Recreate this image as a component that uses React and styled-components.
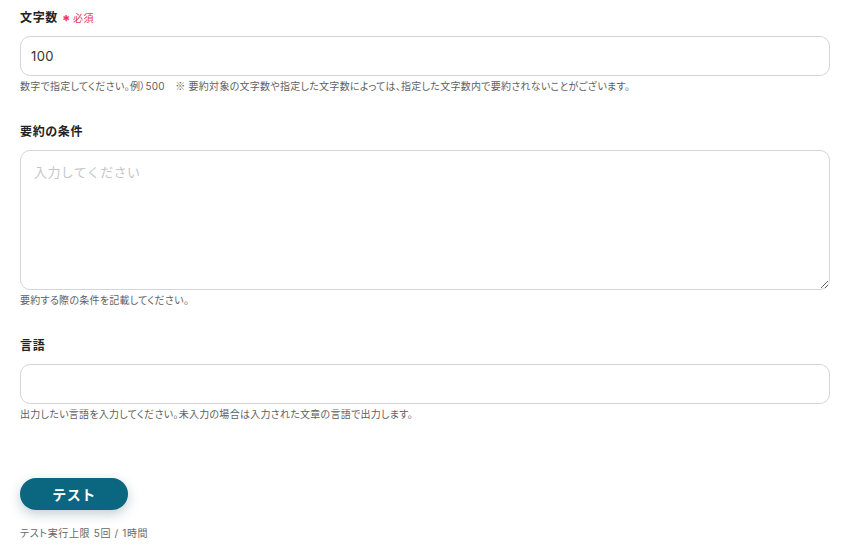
import React from 'react';
import styled, { createGlobalStyle } from 'styled-components';

const GlobalStyle = createGlobalStyle`
	html, body {
		margin: 0;
		padding: 0;
		background: #ffffff;
		font-family: 'Inter', 'Noto Sans CJK JP', sans-serif;
		font-feature-settings: 'palt';
		letter-spacing: 0.04em;
		color: #222;
	}
`;

const Mark = styled.span`
	font-family: 'Noto Sans CJK JP', sans-serif;
`;

const fields = [
	{
		label: '文字数',
		required: true,
		value: '100',
		help: (
			<>
				数字で指定してください。例）500　<Mark>※</Mark> 要約対象の文字数や指定した文字数によっては、指定した文字数内で要約されないことがございます。
			</>
		),
	},
	{
		label: '要約の条件',
		multiline: true,
		placeholder: '入力してください',
		help: '要約する際の条件を記載してください。',
	},
	{
		label: '言語',
		value: '',
		help: '出力したい言語を入力してください。未入力の場合は入力された文章の言語で出力します。',
	},
];

const App = () => {
	return (
		<>
			<GlobalStyle />
			<Page>
				{fields.map(field => (
					<Field key={field.label}>
						<Label>
							{field.label}
							{field.required ? (
								<Required>
									<Star>*</Star>必須
								</Required>
							) : null}
						</Label>
						{field.multiline ? (
							<TextArea placeholder={field.placeholder} />
						) : (
							<Input defaultValue={field.value} />
						)}
						<Help>{field.help}</Help>
					</Field>
				))}
				<ButtonRow>
					<TestButton>テスト</TestButton>
					<Limit>テスト実行上限 5回 / 1時間</Limit>
				</ButtonRow>
			</Page>
		</>
	);
};

const Page = styled.div`
	padding: 10px 24px 0 20px;
	display: flex;
	flex-direction: column;
	gap: 31px;
`;

const Field = styled.div`
	display: flex;
	flex-direction: column;
`;

const Label = styled.div`
	display: flex;
	align-items: center;
	font-size: 12px;
	font-weight: 700;
	line-height: 16px;
	color: #222;
	margin-bottom: 10px;
`;

const Required = styled.span`
	display: inline-flex;
	align-items: center;
	margin-left: 4px;
	font-size: 10px;
	font-weight: 400;
	color: #e8384f;
`;

const Star = styled.span`
	font-size: 15px;
	font-weight: 700;
	margin-right: 2px;
	line-height: 1;
	position: relative;
	top: 2px;
`;

const boxStyle = `
	box-sizing: border-box;
	width: 100%;
	border: 1px solid #d3d5da;
	border-radius: 10px;
	background: #fff;
	font-family: 'Inter', 'Noto Sans CJK JP', sans-serif;
	font-size: 13px;
	letter-spacing: 0.03em;
	color: #333;
	outline: none;
	&::placeholder {
		color: #c4c6cb;
	}
`;

const Input = styled.input`
	${boxStyle}
	height: 40px;
	padding: 0 10px;
`;

const TextArea = styled.textarea`
	${boxStyle}
	height: 140px;
	padding: 11px 13px;
	resize: vertical;
	display: block;
`;

const Help = styled.div`
	font-size: 10px;
	line-height: 14px;
	letter-spacing: 0.027em;
	color: #5f5f5f;
	margin-top: 3px;
`;

const ButtonRow = styled.div`
	display: flex;
	flex-direction: column;
	align-items: flex-start;
	margin-top: 26px;
`;

const TestButton = styled.button`
	width: 108px;
	height: 32px;
	border: none;
	border-radius: 16px;
	background: #0b6680;
	color: #fff;
	font-family: 'Inter', 'Noto Sans CJK JP', sans-serif;
	font-size: 14px;
	font-weight: 700;
	letter-spacing: 0.04em;
	box-shadow: 0 4px 12px rgba(11, 60, 80, 0.25);
	cursor: pointer;
`;

const Limit = styled.div`
	margin-top: 15px;
	font-size: 10px;
	color: #666;
`;

export default App;
